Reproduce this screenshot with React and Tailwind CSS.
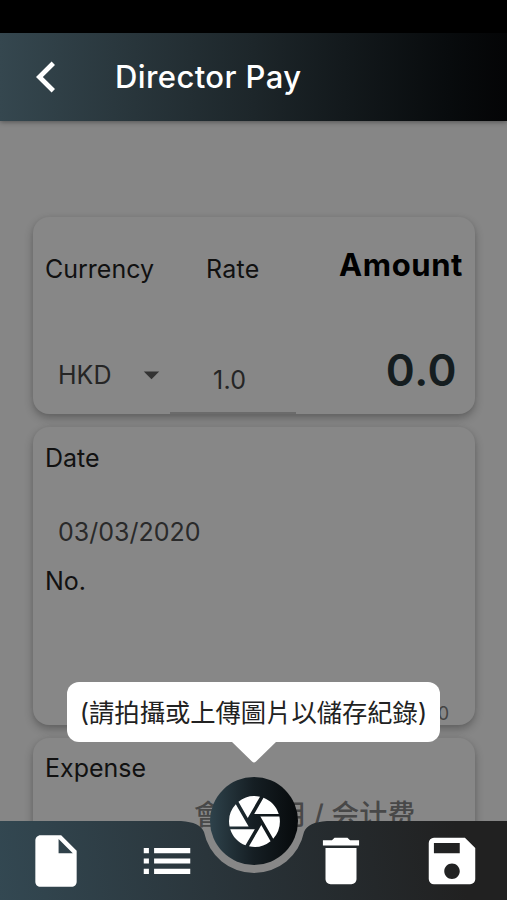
import {
  MdArrowDropDown,
  MdCamera,
  MdDelete,
  MdInsertDriveFile,
  MdList,
  MdSave,
} from 'react-icons/md'

function Card({ className, children }) {
  return (
    <section
      className={`rounded-2xl bg-[#878787] shadow-[0_4px_8px_rgba(0,0,0,0.28),0_0_4px_rgba(0,0,0,0.03)] ${className}`}
    >
      {children}
    </section>
  )
}

function Header() {
  return (
    <header className="relative z-10 flex h-[88px] shrink-0 items-center bg-linear-to-r from-[#35474f] via-[#1d262a] to-[#040506] pl-[36px] text-white shadow-[0_1px_5px_rgba(0,0,0,0.4)]">
      <button aria-label="Back">
        <svg className="h-[32px] w-[20px]" viewBox="0 0 20 32" fill="none">
          <path d="M17.3 2.2L3.4 16L17.3 29.8" stroke="currentColor" strokeWidth="4.8" />
        </svg>
      </button>
      <h1 className="ml-[59px] text-[31px] leading-[40px] font-medium tracking-[0.4px]">Director Pay</h1>
    </header>
  )
}

function BottomNav() {
  return (
    <nav className="absolute inset-x-0 bottom-0 h-[79px] text-white">
      {/* Bar with the round notch for the camera button */}
      <svg className="absolute inset-0 size-full" viewBox="0 0 507 79">
        <defs>
          <linearGradient id="bar" gradientUnits="userSpaceOnUse" x1="0" y1="79" x2="507" y2="0">
            <stop offset="0" stopColor="#334852" />
            <stop offset="0.5" stopColor="#283136" />
            <stop offset="0.9" stopColor="#212121" />
            <stop offset="1" stopColor="#212121" />
          </linearGradient>
        </defs>
        <path
          d="M0 0H181C194 1 201 4 204 11A51 51 0 0 0 304 11C307 4 314 1 327 0H507V79H0Z"
          fill="url(#bar)"
        />
      </svg>
      <div className="relative flex h-full items-center pl-[25px]">
        <button aria-label="File">
          <MdInsertDriveFile className="size-[62px]" />
        </button>
        <button aria-label="List" className="ml-[49px]">
          <MdList className="size-[62px]" />
        </button>
        <button aria-label="Delete" className="ml-[112px]">
          <MdDelete className="size-[62px]" />
        </button>
        <button aria-label="Save" className="ml-[49px]">
          <MdSave className="size-[62px]" />
        </button>
      </div>
      <button
        aria-label="Camera"
        className="absolute -top-[44px] left-[210px] flex size-[88px] items-center justify-center rounded-full bg-linear-to-r from-[#2e424b] via-[#151e23] to-[#070a0c]"
      >
        <MdCamera className="size-[61px]" />
      </button>
    </nav>
  )
}

function Tooltip() {
  return (
    <div className="absolute top-[682px] left-[67px] flex h-[60px] w-[373px] items-center justify-center rounded-xl bg-white">
      <p className="pt-px text-[25.3px] leading-none whitespace-nowrap text-[#222]">(請拍攝或上傳圖片以儲存紀錄)</p>
      <svg className="absolute top-[59px] left-[164px] h-[22px] w-[46px]" viewBox="0 0 46 22">
        <path d="M0 0H46L25 20.5Q23 22.5 21 20.5Z" fill="#fff" />
      </svg>
    </div>
  )
}

export default function App() {
  return (
    <div className="relative flex h-[900px] w-[507px] flex-col overflow-hidden bg-[#868686] font-['Inter','Noto_Sans_CJK_TC',sans-serif] text-[25px] leading-[30px] text-[#111]">
      <div className="h-[33px] shrink-0 bg-black" />
      <Header />

      <main className="flex flex-col gap-[13px] pt-24 pr-8 pl-[33px]">
        <Card className="flex h-[197px] shrink-0 pr-3 pl-3">
          <div className="w-[125px] pt-[37px]">
            <h2>Currency</h2>
            <div className="mt-[76px] flex items-center justify-between pl-[13px] text-[#252525]">
              <span>HKD</span>
              <MdArrowDropDown className="-mt-1.5 -mb-1 size-[37px] text-[#333]" />
            </div>
          </div>
          <div className="flex w-[126px] flex-col pt-[37px]">
            <h2 className="pl-9 tracking-[0.3px]">Rate</h2>
            <p className="mt-[81px] pl-[43px] tracking-[0.3px] text-[#252525]">1.0</p>
            <div className="mt-auto h-[2px] bg-[#6b6b6b]" />
          </div>
          <div className="flex-1 pt-[30px] text-right">
            <h2 className="text-[31px] leading-[36px] font-bold tracking-[0.6px] text-black">Amount</h2>
            <p className="mt-[61px] pr-[6px] text-[44px] leading-[52px] font-semibold tracking-[0.5px] text-[#151d20]">0.0</p>
          </div>
        </Card>

        <Card className="flex h-[298px] shrink-0 flex-col pt-4 pr-[26px] pl-3">
          <h2>Date</h2>
          <p className="mt-11 pl-[13px] text-[#2a2a2a]">03/03/2020</p>
          <h2 className="mt-[19px]">No.</h2>
          <p className="mt-[103px] text-right text-[18px] leading-[30px] text-[#444]">0</p>
        </Card>

        <Card className="h-[180px] shrink-0 pt-[15px] pl-3">
          <h2>Expense</h2>
          <p className="mt-4 pl-[149px] text-[28px] leading-[32px] font-medium text-[#484848]">會計費用 / 会计费</p>
        </Card>
      </main>

      <BottomNav />
      <Tooltip />
    </div>
  )
}
